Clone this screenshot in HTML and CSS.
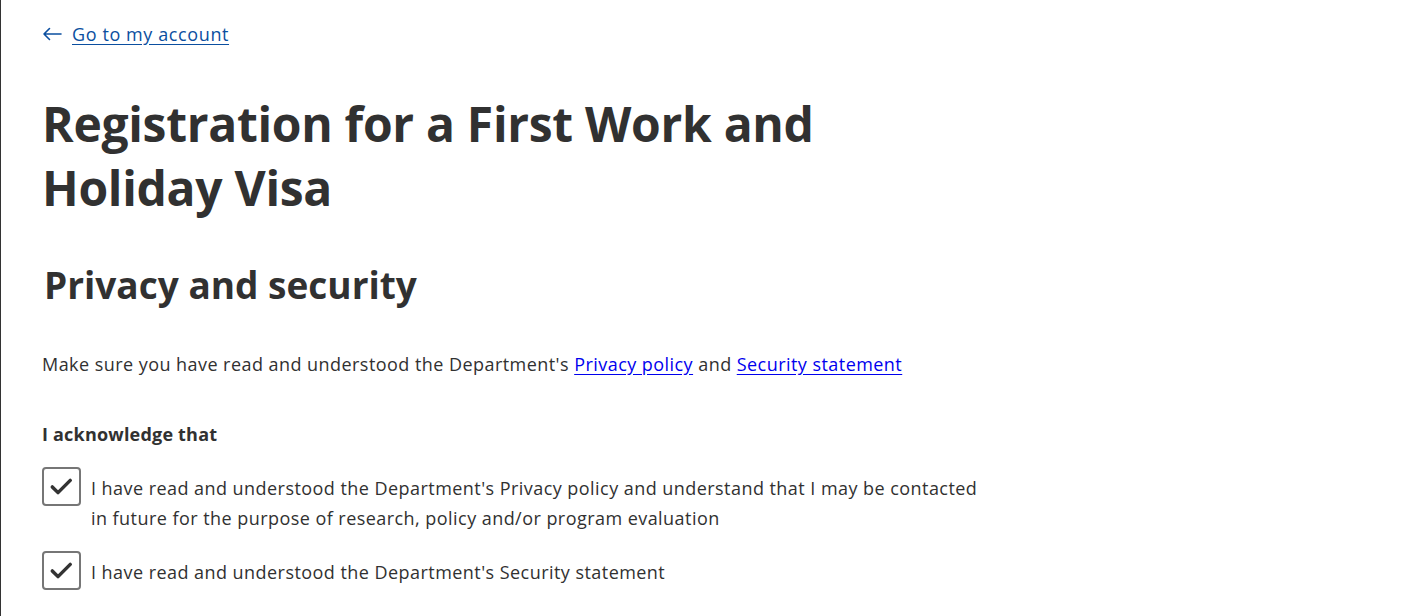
FILE: index.html
```html
<!DOCTYPE html>
<html lang="en">
<head>
<meta charset="utf-8">
<title>Registration for a First Work and Holiday Visa</title>
<link rel="stylesheet" href="styles.css">
</head>
<body>
<div class="page">
  <nav class="back">
    <svg class="back-arrow" viewBox="0 0 20 14" width="20" height="14"><path d="M19 7 H2 M7.5 1.5 L2 7 L7.5 12.5" fill="none" stroke="#0b4fa0" stroke-width="1.6" stroke-linecap="round" stroke-linejoin="round"/></svg>
    <a href="#" class="back-link">Go to my account</a>
  </nav>
  <h1 class="title">Registration for a First Work and<br>Holiday Visa</h1>
  <h2 class="subtitle">Privacy and security</h2>
  <p class="intro">Make sure you have read and understood the Department's <a href="#" class="plain-link">Privacy policy</a> and <a href="#" class="plain-link">Security statement</a></p>
  <fieldset class="ack">
    <legend class="ack-legend">I acknowledge that</legend>
    <label class="check">
      <span class="box"><svg viewBox="0 0 40 40" width="40" height="40"><path d="M9.5 20.5 L16 27 L30 13" fill="none" stroke="#333" stroke-width="4" stroke-linecap="round" stroke-linejoin="round"/></svg></span>
      <span class="check-text">I have read and understood the Department's Privacy policy and understand that I may be contacted in future for the purpose of research, policy and/or program evaluation</span>
    </label>
    <label class="check">
      <span class="box"><svg viewBox="0 0 40 40" width="40" height="40"><path d="M9.5 20.5 L16 27 L30 13" fill="none" stroke="#333" stroke-width="4" stroke-linecap="round" stroke-linejoin="round"/></svg></span>
      <span class="check-text">I have read and understood the Department's Security statement</span>
    </label>
  </fieldset>
</div>
</body>
</html>
```

FILE: styles.css
```css
html, body {
  margin: 0;
  padding: 0;
  background: #fff;
}
body {
  font-family: "Open Sans", "Noto Sans", sans-serif;
  color: #313131;
  border-left: 1px solid #333;
  min-height: 616px;
  box-sizing: border-box;
}
.page {
  padding: 20px 0 0 41px;
}
.back {
  display: flex;
  align-items: center;
  gap: 10px;
  font-size: 18px;
  line-height: 28px;
  color: #0b4fa0;
}
.back-arrow {
  display: block;
  margin-top: -1px;
}
.back-link {
  color: #0b4fa0;
  text-decoration: underline;
  text-underline-offset: 3px;
  letter-spacing: 0.6px;
}
.title {
  margin: 44px 0 0 0;
  font-size: 48px;
  line-height: 64px;
  font-weight: 700;
  color: #313131;
  letter-spacing: -0.3px;
}
.subtitle {
  margin: 37px 0 0 2px;
  font-size: 37px;
  line-height: 56px;
  font-weight: 700;
  color: #313131;
}
.intro {
  margin: 36px 0 0 0;
  font-size: 18px;
  line-height: 30px;
  letter-spacing: 0.45px;
}
.plain-link {
  color: #0000ee;
  text-decoration: underline;
  text-underline-offset: 3px;
}
.ack {
  border: 0;
  padding: 0;
  margin: 40px 0 0 0;
}
.ack-legend {
  padding: 0;
  font-size: 18px;
  font-weight: 700;
  line-height: 30px;
  letter-spacing: 0.2px;
}
.check {
  display: flex;
  align-items: flex-start;
  gap: 10px;
  width: 945px;
  font-size: 18px;
  line-height: 30px;
  letter-spacing: 0.45px;
  margin-top: 18px;
}
.check + .check {
  margin-top: 18px;
}
.box {
  flex: none;
  width: 35px;
  height: 35px;
  border: 2.5px solid #767676;
  border-radius: 4px;
  display: flex;
  align-items: center;
  justify-content: center;
}
.box svg {
  width: 35px;
  height: 35px;
}
.check-text {
  padding-top: 6px;
}
```
